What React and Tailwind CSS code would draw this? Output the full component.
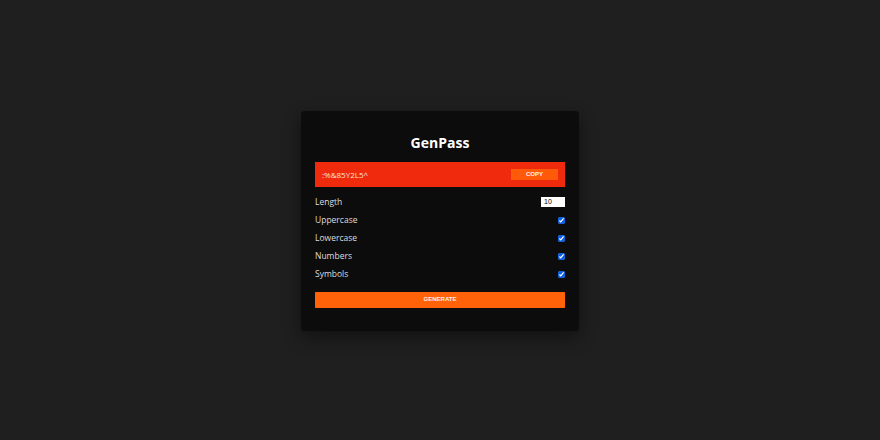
import React, { useState } from "react";

const Option = ({ label, checked, onChange }) => {
  return (
    <label className="flex h-[18px] items-center justify-between">
      <span className="text-[8.5px] text-[#dedede]">{label}</span>
      <input
        type="checkbox"
        checked={checked}
        onChange={onChange}
        className="m-0 h-[7px] w-[7px] accent-[#0b5fe0]"
      />
    </label>
  );
};

export default function App() {
  const [length, setLength] = useState(10);
  const [opts, setOpts] = useState({
    Uppercase: true,
    Lowercase: true,
    Numbers: true,
    Symbols: true,
  });

  const toggle = (key) => {
    setOpts({ ...opts, [key]: !opts[key] });
  };

  return (
    <div
      className="h-[440px] w-full bg-[#1f1f1f] pt-[111px]"
      style={{ fontFamily: '"Open Sans", "Noto Sans", sans-serif' }}
    >
      <div className="mx-auto w-[278px] rounded-[4px] bg-[#0c0c0c] px-[14px] pb-[23px] pt-[22px] shadow-[0_6px_18px_rgba(0,0,0,0.45)]">
        <h1 className="text-center text-[14px] font-bold leading-[20px] text-white">
          GenPass
        </h1>
        <div className="mt-[9px] flex h-[25px] items-center justify-between bg-[#f02a0c] pl-[7px] pr-[7px]">
          <span className="text-[8px] text-[#fde2d8]">:%&amp;85Y2L5^</span>
          <button
            className="h-[11px] w-[47px] bg-[#ff5a0a] text-[6px] font-bold leading-[11px] text-[#fff1e8]"
            style={{ fontFamily: '"Liberation Sans", Arial, sans-serif' }}
          >
            COPY
          </button>
        </div>
        <div className="mt-[6px] flex flex-col">
          <div className="flex h-[18px] items-center justify-between">
            <span className="text-[8.5px] text-[#dedede]">Length</span>
            <input
              type="text"
              value={length}
              onChange={(e) => setLength(e.target.value)}
              className="h-[10px] w-[24px] bg-white px-[3px] text-[7px] leading-[10px] text-black outline-none"
              style={{ fontFamily: '"Liberation Sans", Arial, sans-serif' }}
            />
          </div>
          {Object.keys(opts).map((key) => (
            <Option
              key={key}
              label={key}
              checked={opts[key]}
              onChange={() => toggle(key)}
            />
          ))}
        </div>
        <button
          className="mt-[7px] h-[16px] w-full rounded-[1px] bg-[#ff6208] text-[6px] font-bold text-[#fff1e8]"
          style={{ fontFamily: '"Liberation Sans", Arial, sans-serif' }}
        >
          GENERATE
        </button>
      </div>
    </div>
  );
}
